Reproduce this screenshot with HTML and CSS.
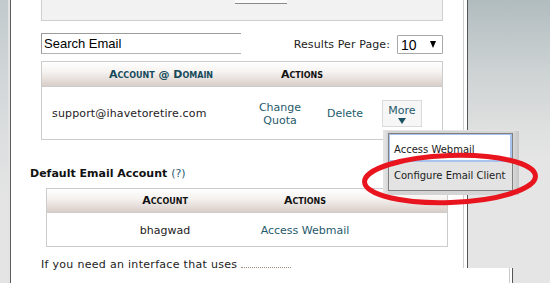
FILE: index.html
```html
<!DOCTYPE html>
<html>
<head>
<meta charset="utf-8">
<link rel="stylesheet" href="styles.css">
</head>
<body>
<div class="page">
  <div class="left"></div>
  <div class="main">
    <div class="topbox"><div class="topbar"></div></div>
    <div class="searchrow">
      <div class="search">Search Email</div>
      <div class="rpp">
        <span class="rpp-label">Results Per Page:</span>
        <div class="select"><span>10</span><span class="arr"></span></div>
      </div>
    </div>
    <div class="table t1">
      <div class="thead">
        <div class="th link">Account @ Domain</div>
        <div class="th">Actions</div>
      </div>
      <div class="row">
        <div class="email">support@ihavetoretire.com</div>
        <div class="cq link">Change<br>Quota</div>
        <div class="del link">Delete</div>
        <div class="more link">More<span class="tri"></span></div>
      </div>
    </div>
    <h3 class="dea">Default Email Account <span class="q">(?)</span></h3>
    <div class="table t2">
      <div class="thead">
        <div class="th">Account</div>
        <div class="th">Actions</div>
      </div>
      <div class="row">
        <div class="cell">bhagwad</div>
        <div class="cell link">Access Webmail</div>
      </div>
    </div>
    <p class="foot">If you need an interface that uses <span class="cut"></span></p>
  </div>
  <div class="sep"></div>
  <div class="rest"></div>

  <div class="sidewin"><div class="sidewin-in"></div></div>

  <div class="menu">
    <div class="menu-in">
      <div class="mi mi-focus">Access Webmail</div>
      <div class="mi mi-hover">Configure Email Client</div>
    </div>
  </div>

  <svg class="circle" width="190" height="68" viewBox="0 0 190 68">
    <ellipse cx="95" cy="34" rx="85.5" ry="23.5" fill="none" stroke="#e8141e" stroke-width="5" transform="rotate(-2 95 34)"/>
  </svg>
</div>
</body>
</html>
```

FILE: styles.css
```css
* { box-sizing: border-box; }
html, body { margin: 0; padding: 0; }
body {
  width: 550px;
  height: 283px;
  overflow: hidden;
  font-family: "DejaVu Sans", Verdana, sans-serif;
  font-size: 11px;
  color: #222;
  background: #e5e5e5;
}
.page {
  position: relative;
  display: flex;
  height: 283px;
}
.left {
  width: 11px;
  flex: none;
  border-right: 1px solid #5c5c5c;
  background: linear-gradient(90deg, transparent 0 8px, #e2e4e4 8px 10px),
              linear-gradient(#c2cacd, #d9dcdd 120px, #e4e4e4 200px);
}
.main {
  width: 499px;
  flex: none;
  background: #fff;
  border-right: 1px solid #c8c8c8;
  display: flex;
  flex-direction: column;
  align-items: flex-start;
}
.sep {
  width: 3px;
  flex: none;
  background: #fff;
  border-right: 1px solid #555;
}
.rest { flex: 1; background: #e5e5e5; }

.topbox {
  margin-left: 30px;
  width: 402px;
  height: 21px;
  flex: none;
  background: #f2f2f2;
  border: 1px solid #cfcfcf;
  border-top: none;
}
.topbar {
  margin-left: 193px;
  width: 52px;
  height: 4px;
  border-bottom: 1px solid #8a8a8a;
  background: #fbfbfb;
}

.searchrow {
  margin-top: 12px;
  margin-left: 30px;
  width: 402px;
  display: flex;
  align-items: flex-end;
  justify-content: space-between;
}
.search {
  width: 200px;
  height: 21px;
  border: 1px solid #9c9c9c;
  border-right: none;
  border-bottom-color: #b4b4b4;
  font-family: "Liberation Sans", Arial, sans-serif;
  font-size: 13px;
  line-height: 19px;
  padding-left: 2px;
  color: #000;
}
.rpp {
  display: flex;
  align-items: center;
  gap: 7px;
}
.rpp-label { color: #222; letter-spacing: 0.1px; }
.select {
  width: 46px;
  height: 19px;
  border: 1px solid #a8a8a8;
  border-radius: 1px;
  display: flex;
  align-items: center;
  justify-content: space-between;
  padding: 0 6px 0 3px;
  font-family: "Liberation Sans", Arial, sans-serif;
  font-size: 14px;
  color: #000;
}
.arr {
  width: 0; height: 0;
  border-left: 3.5px solid transparent;
  border-right: 3.5px solid transparent;
  border-top: 7px solid #000;
}

.table {
  width: 402px;
  border: 1px solid #cccccc;
  background: #fff;
  flex: none;
}
.t1 { margin-left: 30px; margin-top: 7px; }
.t2 { margin-left: 35px; margin-top: 7px; }
.thead {
  display: grid;
  background: linear-gradient(#ffffff, #f6f3f1 40%, #d9cec8);
  border-bottom: 1px solid #cccccc;
  font-weight: bold;
  font-variant: small-caps;
  font-size: 11px;
  color: #111;
}
.t1 .thead { height: 25px; grid-template-columns: 238px 44px; }
.t2 .thead { height: 24px; grid-template-columns: 236px 44px; }
.th {
  display: flex;
  align-items: center;
  justify-content: center;
  white-space: nowrap;
}
.t1 .th { padding-top: 1px; }
.thead .link { color: #154a5b; }
.link { color: #1f5a6c; }

.t1 .row {
  height: 52px;
  display: flex;
  align-items: center;
}
.email { width: 196px; padding-left: 10px; color: #1e1a1e; letter-spacing: 0.15px; }
.cq { width: 84px; text-align: center; line-height: 13px; padding-top: 1px; }
.del { width: 46px; text-align: center; }
.more {
  margin-left: 14px;
  width: 40px;
  height: 27px;
  margin-top: 1px;
  border: 1px solid #dadada;
  background: #f6f6f6;
  display: flex;
  flex-direction: column;
  align-items: center;
  padding-top: 4px;
  gap: 1px;
  line-height: 12px;
}
.tri {
  width: 0; height: 0;
  border-left: 4px solid transparent;
  border-right: 4px solid transparent;
  border-top: 6px solid #1a5163;
}

.dea {
  margin: 27px 0 0 19px;
  font-size: 11px;
  line-height: 14px;
  font-weight: bold;
  color: #111;
}
.q { font-weight: normal; color: #1f5a6c; }

.t2 .row {
  height: 33px;
  display: grid;
  grid-template-columns: 236px 44px;
  align-items: center;
}
.cell {
  display: flex;
  justify-content: center;
  white-space: nowrap;
  padding-top: 1px;
}

.foot {
  margin: 11px 0 0 30px;
  line-height: 14px;
  color: #222;
  white-space: nowrap;
  letter-spacing: 0.3px;
}
.cut {
  display: inline-block;
  width: 50px;
  height: 6px;
  border-bottom: 1px dotted #9a8a7a;
  vertical-align: baseline;
}

.sidewin {
  position: absolute;
  left: 463px;
  top: 0;
  width: 87px;
  height: 268px;
  background: #fff;
  border-left: 1px solid #cfcfcf;
  padding-left: 3px;
}
.sidewin-in {
  height: 100%;
  border-left: 1px solid #555;
  background: linear-gradient(#b1bcbf, #cdd2d3 70px, #dfe0e0 130px, #e5e5e5 160px);
}

.menu {
  position: absolute;
  left: 383px;
  top: 130px;
  width: 136px;
  height: 65px;
  border-top: 1px solid #e2e2e2;
  border-left: 1px solid #e2e2e2;
  background: linear-gradient(90deg, #e4e4e4, #d2d2d2 5px, #d6d6d6 130px, #c6c6c6);
  padding: 2px 5px 0 4px;
}
.menu-in {
  width: 125px;
  height: 58px;
  border: 1px solid #808080;
  background: #e3e3e3;
  font-size: 10px;
}
.mi {
  padding-left: 4px;
  white-space: nowrap;
  color: #1b1b1b;
}
.mi-focus {
  height: 28px;
  background: #fff;
  border: 1px solid #a8c4ee;
  border-width: 1px 2px 2px 1px;
  padding-top: 8px;
  line-height: 14px;
}
.mi-hover {
  height: 28px;
  padding-top: 7px;
  line-height: 14px;
  padding-left: 5px;
}

.circle {
  position: absolute;
  left: 355px;
  top: 145px;
}
```
